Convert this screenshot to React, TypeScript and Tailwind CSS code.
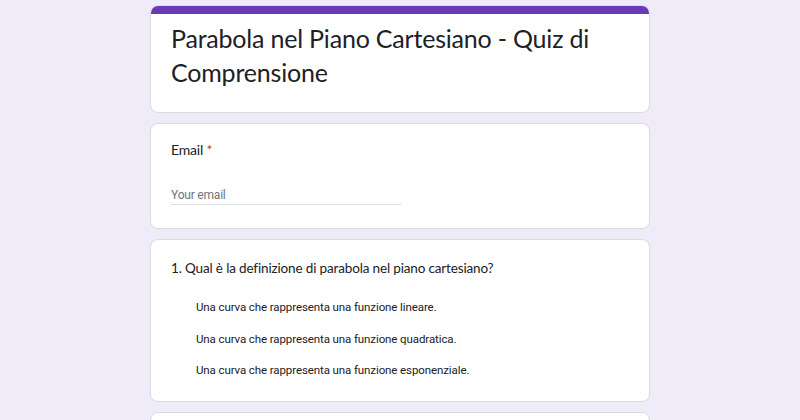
export default function App() {
  const options = [
    "Una curva che rappresenta una funzione lineare.",
    "Una curva che rappresenta una funzione quadratica.",
    "Una curva che rappresenta una funzione esponenziale.",
  ];
  const sans = { fontFamily: "Lato, 'Open Sans', sans-serif" };
  return (
    <div className="min-h-[420px] w-full bg-[#f0ebf8] pt-[5px] text-[#202124]" style={{ fontFamily: "Roboto, 'Liberation Sans', sans-serif" }}>
      <div className="mx-auto flex w-[500px] flex-col gap-[10px]">
        <div className="overflow-hidden rounded-lg border border-[#dadce0] bg-white">
          <div className="h-[8px] bg-[#673ab7]" />
          <div className="px-[20px] pb-[23px] pt-[7px]">
            <h1 className="text-[25px] leading-[34px] tracking-[-0.2px] text-[#202124]" style={sans}>
              Parabola nel Piano Cartesiano - Quiz di Comprensione
            </h1>
          </div>
        </div>
        <div className="rounded-lg border border-[#dadce0] bg-white px-[20px] pb-[23px] pt-[16px]">
          <div className="text-[14px] leading-[20px] tracking-[-0.2px]" style={sans}>
            Email <span className="text-[#d93025]">*</span>
          </div>
          <div className="mt-[27px] w-[230px] border-b border-[#e0e0e0] pb-[1px] text-[12px] leading-[16px] tracking-[-0.2px] text-[#70757a]">
            Your email
          </div>
        </div>
        <div className="rounded-lg border border-[#dadce0] bg-white px-[20px] pb-[23px] pt-[18px]">
          <div className="text-[13.5px] leading-[20px] tracking-[-0.15px]" style={sans}>
            1. Qual è la definizione di parabola nel piano cartesiano?
          </div>
          <div className="mt-[21px] flex flex-col gap-[15.5px] pl-[25px]">
            {options.map((o) => (
              <div key={o} className="text-[11.5px] leading-[16px] tracking-[-0.1px]">
                {o}
              </div>
            ))}
          </div>
        </div>
        <div className="h-[60px] rounded-lg border border-[#dadce0] bg-white" />
      </div>
    </div>
  );
}
